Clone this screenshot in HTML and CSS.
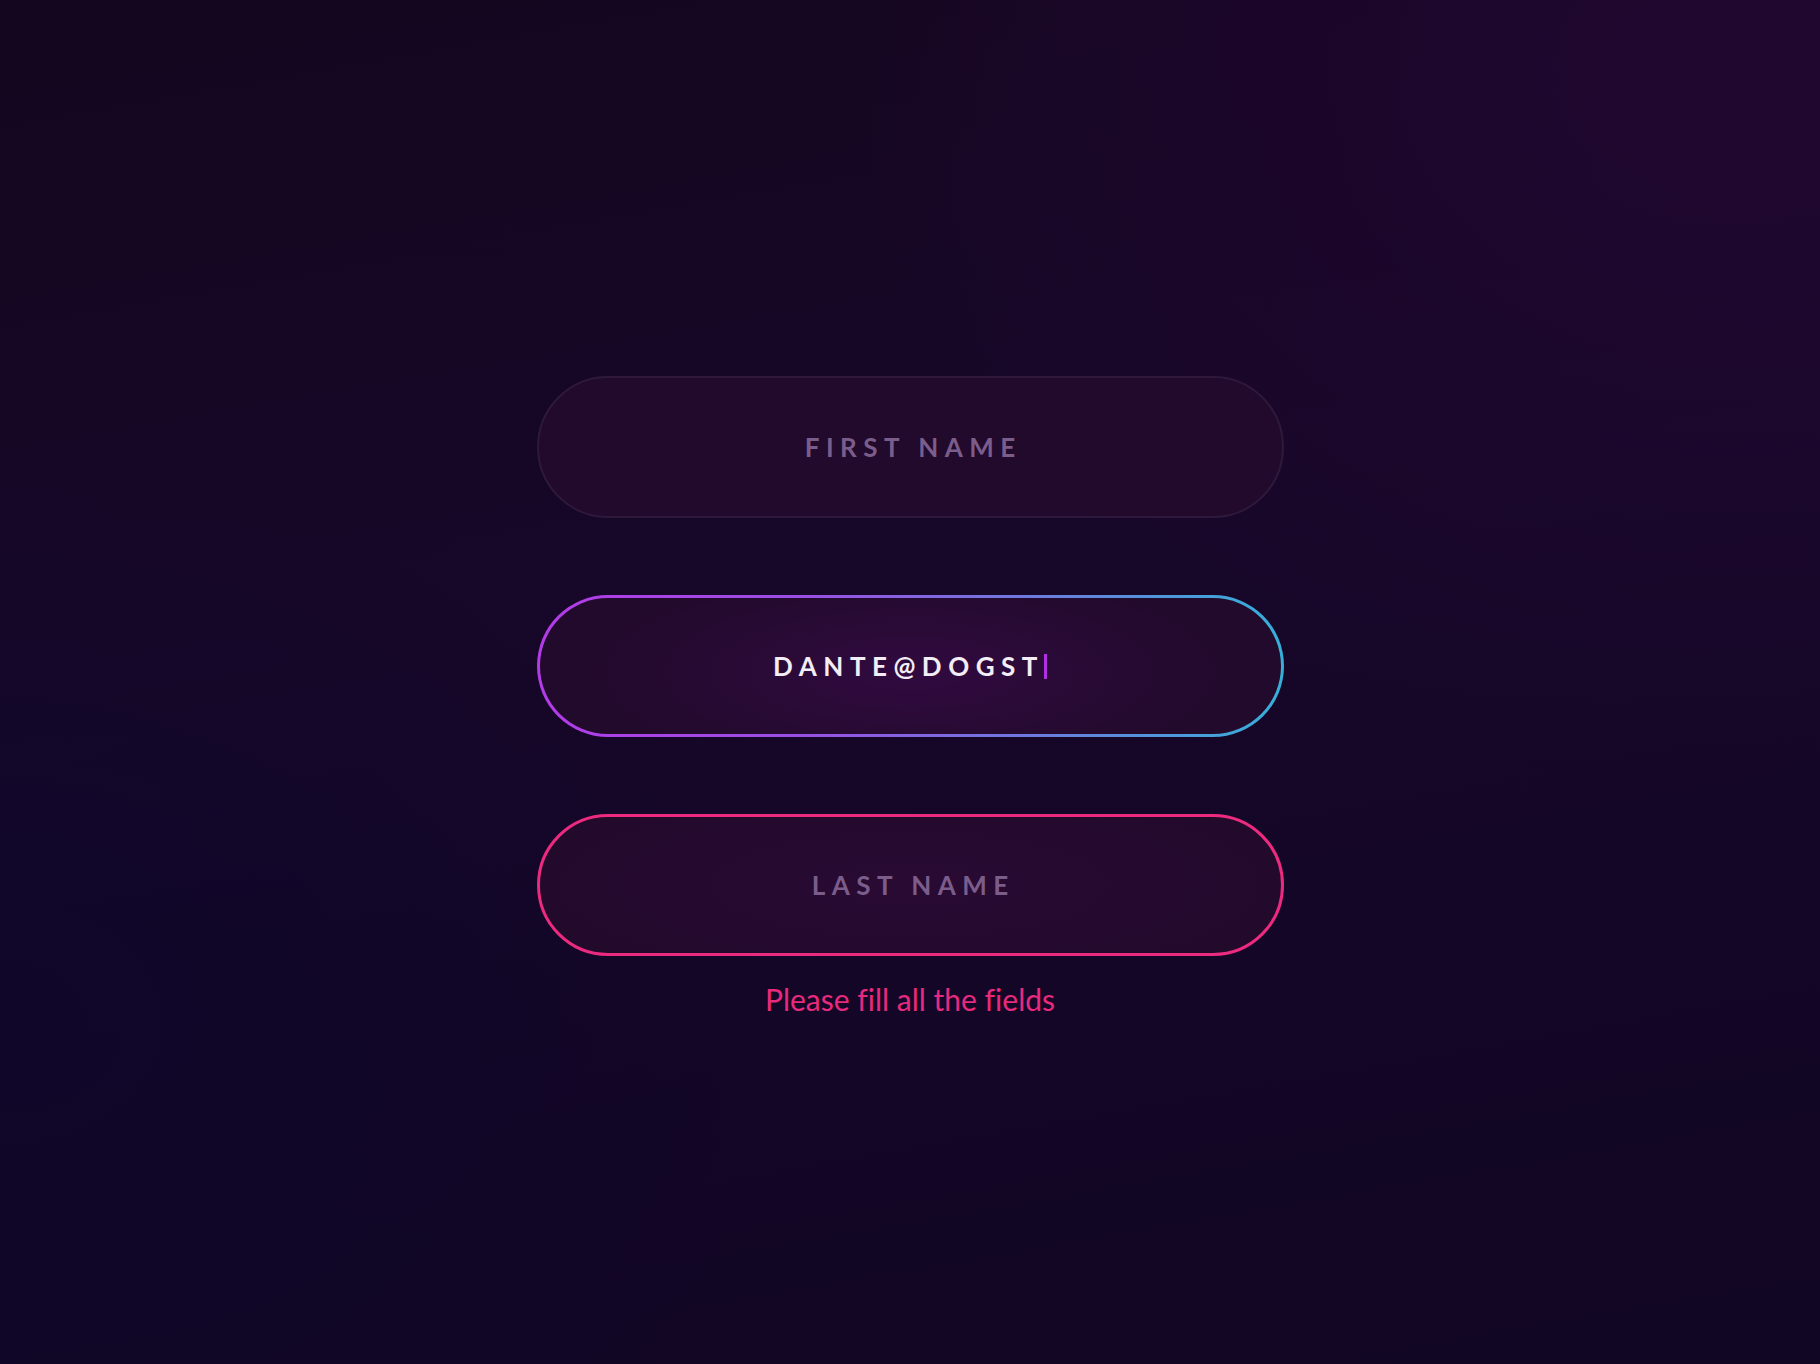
FILE: index.html
```html
<!DOCTYPE html>
<html lang="en">
<head>
<meta charset="utf-8">
<title>Sign up</title>
<link rel="stylesheet" href="styles.css">
</head>
<body>
<main class="stage">
  <form class="form">
    <div class="field field-idle">
      <span class="placeholder">FIRST NAME</span>
    </div>
    <div class="field field-active">
      <span class="value">DANTE@DOGST</span><span class="caret"></span>
    </div>
    <div class="field field-error">
      <span class="placeholder">LAST NAME</span>
    </div>
    <p class="error">Please fill all the fields</p>
  </form>
</main>
</body>
</html>
```

FILE: styles.css
```css
* { box-sizing: border-box; }

html, body {
  margin: 0;
  padding: 0;
}

body {
  width: 1820px;
  height: 1364px;
  overflow: hidden;
  font-family: "Lato", "Liberation Sans", sans-serif;
  font-variant-ligatures: none;
  background:
    radial-gradient(ellipse 900px 700px at 95% 5%, rgba(34, 7, 50, 0.85) 0%, rgba(34, 7, 50, 0) 100%),
    radial-gradient(ellipse 800px 600px at 0% 75%, rgba(14, 7, 42, 0.85) 0%, rgba(14, 7, 42, 0) 100%),
    linear-gradient(170deg, #15061f 0%, #170729 45%, #130626 75%, #110623 100%);
}

.stage {
  height: 100%;
  display: flex;
  justify-content: center;
  padding-top: 376px;
}

.form {
  width: 747px;
  margin: 0;
  display: flex;
  flex-direction: column;
  align-items: center;
  gap: 77px;
}

.field {
  width: 100%;
  height: 142px;
  border-radius: 71px;
  display: flex;
  align-items: center;
  justify-content: center;
  font-weight: 700;
  font-size: 26px;
  letter-spacing: 6.5px;
}

.field-idle {
  background: #210a2b;
  border: 2px solid #2e193b;
}

.field-active {
  border: 3px solid transparent;
  background:
    radial-gradient(ellipse 340px 110px at 50% 55%, #310a40 0%, #280a34 55%, #210a2b 100%) padding-box,
    linear-gradient(90deg, #b43be8 0%, #9a4fe4 35%, #6f79de 65%, #36b0d8 100%) border-box;
}

.field-error {
  border: 3px solid #ec2a7f;
  background: radial-gradient(ellipse 420px 110px at 50% 50%, #290a33 0%, #220a2b 100%);
}

.placeholder {
  color: #7b5d8b;
  margin-right: -6.5px;
}

.value {
  color: #f3edf5;
}

.caret {
  display: inline-block;
  width: 3px;
  height: 25px;
  margin-left: 0;
  background: #b22fe3;
}

.error {
  margin: -52px 0 0;
  font-size: 30px;
  line-height: 36px;
  color: #e72a7e;
  font-weight: 400;
}
```
